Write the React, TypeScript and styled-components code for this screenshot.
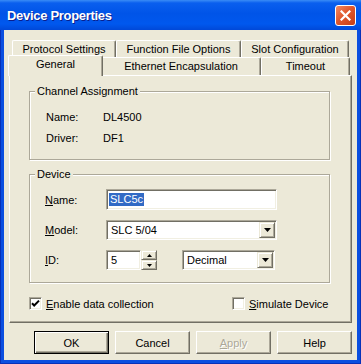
import styled, { createGlobalStyle } from "styled-components";

const GlobalStyle = createGlobalStyle`
  html, body {
    margin: 0;
    padding: 0;
    background: #ffffff;
  }
  body {
    font-family: "Liberation Sans", Arial, sans-serif;
    font-size: 11px;
    color: #000000;
  }
`;

const Window = styled.div`
  width: 361px;
  height: 364px;
  box-sizing: border-box;
  display: flex;
  flex-direction: column;
  background: #0b4fe0;
  box-shadow: inset 0 0 0 1px #0831b8;
`;

const TitleBar = styled.div`
  height: 30px;
  flex: none;
  display: flex;
  align-items: center;
  justify-content: space-between;
  padding: 0 5px 0 7px;
  box-sizing: border-box;
  background: linear-gradient(
    to bottom,
    #3a8cf6 0%,
    #0a5fee 10%,
    #0054e8 45%,
    #0058ee 80%,
    #0048d8 100%
  );
`;

const Title = styled.span`
  color: #ffffff;
  font-weight: bold;
  font-size: 13px;
  letter-spacing: -0.3px;
  text-shadow: 1px 1px 0 #0a1e8c;
`;

const CloseButton = styled.div`
  width: 21px;
  height: 21px;
  box-sizing: border-box;
  border: 1px solid #ffffff;
  border-radius: 3px;
  display: flex;
  align-items: center;
  justify-content: center;
  background: linear-gradient(135deg, #f28a64 0%, #e0582e 45%, #c63d14 100%);
`;

const Client = styled.div`
  flex: 1;
  margin: 0 4px 4px;
  background: #ece9d8;
  padding: 10px 5px 0;
  display: flex;
  flex-direction: column;
`;

const TabRow = styled.div<{ $h: number; $indent: number }>`
  display: flex;
  align-items: flex-start;
  height: ${(p) => p.$h}px;
  padding-left: ${(p) => p.$indent}px;
`;

const Tab = styled.div<{ $w: number; $h: number; $active?: boolean }>`
  width: ${(p) => (p.$active ? p.$w + 4 : p.$w)}px;
  height: ${(p) => (p.$active ? p.$h + 3 : p.$h)}px;
  margin: ${(p) => (p.$active ? "-2px -2px 0" : "0")};
  position: relative;
  z-index: ${(p) => (p.$active ? 2 : 1)};
  box-sizing: border-box;
  flex: none;
  background: #ece9d8;
  border-top: 1px solid #ffffff;
  border-left: 1px solid #ffffff;
  border-right: 1px solid #716f64;
  box-shadow: inset -1px 0 0 #aca899;
  border-radius: 2px 2px 0 0;
  text-align: center;
  line-height: 15px;
  padding-top: 1px;
  white-space: nowrap;
`;

const Panel = styled.div`
  height: 248px;
  box-sizing: border-box;
  border-top: 1px solid #ffffff;
  border-left: 1px solid #ffffff;
  border-right: 1px solid #716f64;
  border-bottom: 1px solid #716f64;
  box-shadow: inset -1px -1px 0 #aca899;
  padding: 9px 20px 0 19px;
  display: flex;
  flex-direction: column;
`;

const Group = styled.fieldset<{ $gap?: number }>`
  margin: ${(p) => p.$gap ?? 0}px 1px 0 0;
  padding: 0;
  min-width: 0;
  border: 1px solid #aca899;
  box-shadow: inset 1px 1px 0 #ffffff, 1px 1px 0 #ffffff;
`;

const Legend = styled.legend`
  margin-left: 5px;
  padding: 0 2px;
  line-height: 13px;
  background: #ece9d8;
`;

const GroupBody = styled.div<{ $pad: string }>`
  padding: ${(p) => p.$pad};
  display: flex;
  flex-direction: column;
`;

const InfoRow = styled.div`
  display: flex;
  align-items: center;
  height: 21px;
`;

const FieldRow = styled.div`
  display: flex;
  align-items: center;
  margin-bottom: 10px;
  &:last-child {
    margin-bottom: 0;
  }
`;

const Label = styled.span<{ $w: number }>`
  width: ${(p) => p.$w}px;
  flex: none;
  white-space: nowrap;
`;

const Key = styled.span`
  text-decoration: underline;
`;

const Sunken = styled.div<{ $w: number; $h: number }>`
  width: ${(p) => p.$w}px;
  height: ${(p) => p.$h}px;
  box-sizing: border-box;
  flex: none;
  background: #ffffff;
  border: 1px solid;
  border-color: #aca899 #ffffff #ffffff #aca899;
  box-shadow: inset 1px 1px 0 #716f64, inset -1px -1px 0 #f1efe2;
  display: flex;
  align-items: center;
  padding: 1px 1px 1px 2px;
  white-space: nowrap;
`;

const Selection = styled.span`
  background: #316ac5;
  color: #ffffff;
  padding: 0 1px;
  line-height: 13px;
`;

const ComboText = styled.span`
  flex: 1;
  padding-left: 2px;
`;

const RaisedButton = styled.div<{ $w: number; $h: number }>`
  width: ${(p) => p.$w}px;
  height: ${(p) => p.$h}px;
  box-sizing: border-box;
  flex: none;
  background: #ece9d8;
  border: 1px solid;
  border-color: #ece9d8 #716f64 #716f64 #ece9d8;
  box-shadow: inset 1px 1px 0 #ffffff, inset -1px -1px 0 #aca899;
  display: flex;
  align-items: center;
  justify-content: center;
`;

const SpinBox = styled.div`
  display: flex;
  flex: none;
  margin-right: 25px;
`;

const SpinButtons = styled.div`
  display: flex;
  flex-direction: column;
  flex: none;
`;

const CheckRow = styled.div`
  display: grid;
  grid-template-columns: 203px auto;
  margin-top: 14px;
`;

const CheckLabel = styled.label`
  display: flex;
  align-items: center;
  gap: 4px;
  white-space: nowrap;
`;

const CheckBox = styled.span`
  width: 13px;
  height: 13px;
  box-sizing: border-box;
  background: #ffffff;
  border: 1px solid;
  border-color: #aca899 #ffffff #ffffff #aca899;
  box-shadow: inset 1px 1px 0 #716f64, inset -1px -1px 0 #f1efe2;
  display: flex;
  align-items: center;
  justify-content: center;
`;

const ButtonBar = styled.div`
  display: flex;
  justify-content: flex-end;
  gap: 6px;
  margin-top: 8px;
`;

const DialogButton = styled.div<{ $default?: boolean; $disabled?: boolean }>`
  width: 75px;
  height: 23px;
  box-sizing: border-box;
  display: flex;
  align-items: center;
  justify-content: center;
  background: #ece9d8;
  border: 1px solid;
  border-color: ${(p) =>
    p.$default ? "#000000" : "#ffffff #716f64 #716f64 #ffffff"};
  box-shadow: ${(p) =>
    p.$default
      ? "inset 1px 1px 0 #ffffff, inset -1px -1px 0 #716f64, inset -2px -2px 0 #aca899"
      : "inset -1px -1px 0 #aca899"};
  color: ${(p) => (p.$disabled ? "#aca899" : "#000000")};
  text-shadow: ${(p) => (p.$disabled ? "1px 1px 0 #ffffff" : "none")};
`;

const DownArrow = () => (
  <svg width="7" height="4" viewBox="0 0 7 4">
    <path d="M0 0h7L3.5 4z" fill="#000" />
  </svg>
);

const SmallArrow = ({ up }: { up?: boolean }) => (
  <svg width="5" height="3" viewBox="0 0 5 3">
    <path d={up ? "M0 3h5L2.5 0z" : "M0 0h5L2.5 3z"} fill="#000" />
  </svg>
);

const Check = () => (
  <svg width="9" height="9" viewBox="0 0 9 9">
    <path d="M1 4.2l2.2 2.3L8 1.6" stroke="#000" strokeWidth="2" fill="none" />
  </svg>
);

const App = () => {
  return (
    <>
      <GlobalStyle />
      <Window>
        <TitleBar>
          <Title>Device Properties</Title>
          <CloseButton>
            <svg width="11" height="11" viewBox="0 0 11 11">
              <path
                d="M1.5 1.5l8 8M9.5 1.5l-8 8"
                stroke="#fff"
                strokeWidth="2.2"
                strokeLinecap="square"
              />
            </svg>
          </CloseButton>
        </TitleBar>
        <Client>
          <TabRow $h={17} $indent={3}>
            <Tab $w={104} $h={17}>Protocol Settings</Tab>
            <Tab $w={125} $h={17}>Function File Options</Tab>
            <Tab $w={108} $h={17}>Slot Configuration</Tab>
          </TabRow>
          <TabRow $h={18} $indent={1}>
            <Tab $w={91} $h={18} $active>
              General
            </Tab>
            <Tab $w={160} $h={18}>Ethernet Encapsulation</Tab>
            <Tab $w={89} $h={18}>Timeout</Tab>
          </TabRow>
          <Panel>
            <Group>
              <Legend>Channel Assignment</Legend>
              <GroupBody $pad="8px 0 11px 16px">
                <InfoRow>
                  <Label $w={57}>Name:</Label>
                  <span>DL4500</span>
                </InfoRow>
                <InfoRow>
                  <Label $w={57}>Driver:</Label>
                  <span>DF1</span>
                </InfoRow>
              </GroupBody>
            </Group>
            <Group $gap={8}>
              <Legend>Device</Legend>
              <GroupBody $pad="8px 0 12px 15px">
                <FieldRow>
                  <Label $w={61}>
                    <Key>N</Key>ame:
                  </Label>
                  <Sunken $w={171} $h={21}>
                    <Selection>SLC5c</Selection>
                  </Sunken>
                </FieldRow>
                <FieldRow>
                  <Label $w={61}>
                    <Key>M</Key>odel:
                  </Label>
                  <Sunken $w={171} $h={20}>
                    <ComboText>SLC 5/04</ComboText>
                    <RaisedButton $w={16} $h={16}>
                      <DownArrow />
                    </RaisedButton>
                  </Sunken>
                </FieldRow>
                <FieldRow>
                  <Label $w={61}>
                    <Key>I</Key>D:
                  </Label>
                  <SpinBox>
                    <Sunken $w={35} $h={20}>
                      <ComboText>5</ComboText>
                    </Sunken>
                    <SpinButtons>
                      <RaisedButton $w={16} $h={10}>
                        <SmallArrow up />
                      </RaisedButton>
                      <RaisedButton $w={16} $h={10}>
                        <SmallArrow />
                      </RaisedButton>
                    </SpinButtons>
                  </SpinBox>
                  <Sunken $w={93} $h={20}>
                    <ComboText>Decimal</ComboText>
                    <RaisedButton $w={16} $h={16}>
                      <DownArrow />
                    </RaisedButton>
                  </Sunken>
                </FieldRow>
              </GroupBody>
            </Group>
            <CheckRow>
              <CheckLabel>
                <CheckBox>
                  <Check />
                </CheckBox>
                <span>
                  <Key>E</Key>nable data collection
                </span>
              </CheckLabel>
              <CheckLabel>
                <CheckBox />
                <span>
                  <Key>S</Key>imulate Device
                </span>
              </CheckLabel>
            </CheckRow>
          </Panel>
          <ButtonBar>
            <DialogButton $default>OK</DialogButton>
            <DialogButton>Cancel</DialogButton>
            <DialogButton $disabled>
              <span>
                <Key>A</Key>pply
              </span>
            </DialogButton>
            <DialogButton>Help</DialogButton>
          </ButtonBar>
        </Client>
      </Window>
    </>
  );
};

export default App;
